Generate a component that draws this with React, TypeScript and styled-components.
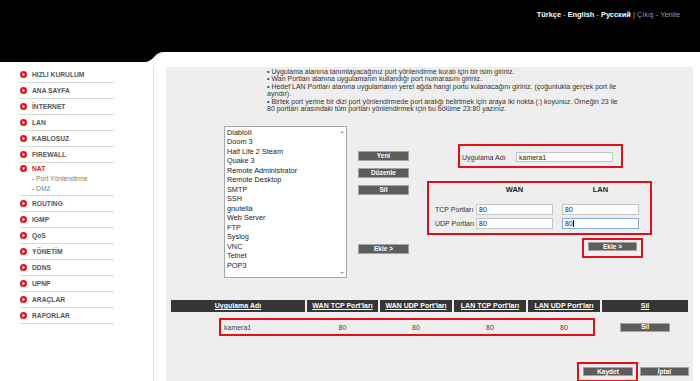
import React from 'react'
import styled, { createGlobalStyle } from 'styled-components'

const RED = '#e3101c'

const GlobalStyle = createGlobalStyle`
  html, body {
    margin: 0;
    padding: 0;
    overflow: hidden;
    background: #fff;
  }
  body {
    font-family: "Liberation Sans", Arial, sans-serif;
  }
`

const menu = [
  'HIZLI KURULUM',
  'ANA SAYFA',
  'İNTERNET',
  'LAN',
  'KABLOSUZ',
  'FIREWALL',
]

const menuAfter = ['ROUTING', 'IGMP', 'QoS', 'YÖNETİM', 'DDNS', 'UPNP', 'ARAÇLAR', 'RAPORLAR']

const apps = [
  'DiabloII',
  'Doom 3',
  'Half Life 2 Steam',
  'Quake 3',
  'Remote Administrator',
  'Remote Desktop',
  'SMTP',
  'SSH',
  'gnutella',
  'Web Server',
  'FTP',
  'Syslog',
  'VNC',
  'Telnet',
  'POP3',
]

const columns = ['Uygulama Adı', "WAN TCP Port'ları", "WAN UDP Port'ları", "LAN TCP Port'ları", "LAN UDP Port'ları", 'Sil']

const MenuIcon = ({ open }: { open?: boolean }) => (
  <svg width="7" height="7" viewBox="0 0 7 7">
    <circle cx="3.5" cy="3.5" r="3.5" fill={RED} />
    {open ? (
      <path d="M1.8 2.5 L5.2 2.5 L3.5 5.2 Z" fill="#fff" />
    ) : (
      <path d="M2.5 1.8 L5.2 3.5 L2.5 5.2 Z" fill="#fff" />
    )}
  </svg>
)

const App = () => {
  return (
    <Page>
      <GlobalStyle />
      <TopBar>
        <TopLinks>
          <Lang>Türkçe</Lang> <Dash>-</Dash> <Lang>English</Lang> <Dash>-</Dash> <Lang>Русский</Lang>{' '}
          <Pipe>|</Pipe> Çıkış - Yenile
        </TopLinks>
      </TopBar>
      <HeaderFoot width="170" height="10" viewBox="0 0 170 10">
        <path d="M0 0 H170 L164 0 C160 0 158 1 155 4 C151 8 149 10 143 10 H0 Z" fill="#000" />
      </HeaderFoot>

      <Main>
        <Sidebar>
          <Menu>
            {menu.map((m) => (
              <MenuItem key={m}>
                <MenuIcon />
                {m}
              </MenuItem>
            ))}
            <MenuGroup>
              <MenuItem $active $plain>
                <MenuIcon open />
                NAT
              </MenuItem>
              <SubItem>
                <SubDash>-</SubDash> Port Yönlendirme
              </SubItem>
              <SubItem>
                <SubDash>-</SubDash> DMZ
              </SubItem>
            </MenuGroup>
            {menuAfter.map((m) => (
              <MenuItem key={m}>
                <MenuIcon />
                {m}
              </MenuItem>
            ))}
          </Menu>
        </Sidebar>

        <Content>
          <Notes>
            • Uygulama alanına tanımlayacağınız port yönlendirme kuralı için bir isim giriniz.
            <br />
            • Wan Portları alanına uygulamanın kullandığı port numarasını giriniz.
            <br />
            • Hedef LAN Portları alanına uygulamanın yerel ağda hangi portu kulanacağını giriniz. (çoğunlukla gerçek port ile
            <br />
            ayrıdır).
            <br />
            • Birtek port yerine bir dizi port yönlendirmede port aralığı belirtmek için araya iki nokta (:) koyunuz. Örneğin 23 ile
            <br />
            80 portları arasındaki tüm portları yönlendirmek için bu bölüme 23:80 yazınız.
          </Notes>

          <FormArea>
            <AppList>
              <AppItems>
                {apps.map((a) => (
                  <AppItem key={a}>{a}</AppItem>
                ))}
              </AppItems>
              <ScrollTrack>
                <Arrow $down={false} />
                <Arrow $down />
              </ScrollTrack>
            </AppList>

            <ButtonColumn>
              <GrayButton>Yeni</GrayButton>
              <GrayButton>Düzenle</GrayButton>
              <GrayButton>Sil</GrayButton>
              <GrayButton $offset={42}>Ekle &gt;</GrayButton>
            </ButtonColumn>

            <RightPanel>
              <NameBox>
                <FieldLabel $width={54}>Uygulama Adı</FieldLabel>
                <Field $width={97} $height={10}>
                  kamera1
                </Field>
              </NameBox>

              <PortsBox>
                <PortHead />
                <PortHead>WAN</PortHead>
                <PortHead>LAN</PortHead>
                <PortLabel>TCP Portları</PortLabel>
                <Field $height={11}>80</Field>
                <Field $height={11}>80</Field>
                <PortLabel>UDP Portları</PortLabel>
                <Field $height={11}>80</Field>
                <Field $height={11} $focused>
                  80
                  <Caret />
                </Field>
              </PortsBox>

              <AddBox>
                <GrayButton $width={49} $height={9}>
                  Ekle &gt;
                </GrayButton>
              </AddBox>
            </RightPanel>
          </FormArea>

          <RuleTable>
            {columns.map((c) => (
              <HeadCell key={c}>{c}</HeadCell>
            ))}
            <RowHighlight />
            <DataCell $col={1} $left>
              kamera1
            </DataCell>
            <DataCell $col={2}>80</DataCell>
            <DataCell $col={3}>80</DataCell>
            <DataCell $col={4}>80</DataCell>
            <DataCell $col={5}>80</DataCell>
            <DataCell $col={6}>
              <GrayButton $width={50} $height={9}>
                Sil
              </GrayButton>
            </DataCell>
          </RuleTable>

          <Footer>
            <SaveBox>
              <GrayButton $width={50} $height={9}>
                Kaydet
              </GrayButton>
            </SaveBox>
            <CancelSlot>
              <GrayButton $width={49} $height={9}>
                İptal
              </GrayButton>
            </CancelSlot>
          </Footer>
        </Content>
      </Main>
    </Page>
  )
}

const Page = styled.div`
  display: flex;
  flex-direction: column;
  height: 100vh;
`

const TopBar = styled.header`
  height: 52px;
  background: #000;
  display: flex;
  justify-content: flex-end;
  align-items: flex-start;
  padding: 10px 20px 0 0;
  box-sizing: border-box;
`

const TopLinks = styled.div`
  font-size: 7.4px;
  line-height: 9px;
  color: #9a9a9a;
  white-space: pre;
`

const Lang = styled.span`
  color: #fff;
  font-weight: bold;
`

const Dash = styled.span`
  color: #ddd;
`

const Pipe = styled.span`
  color: #bbb;
`

const HeaderFoot = styled.svg`
  display: block;
  flex-shrink: 0;
`

const Main = styled.div`
  flex: 1;
  display: flex;
  margin-top: 5px;
  min-height: 0;
  overflow: hidden;
`

const Sidebar = styled.aside`
  width: 154px;
  flex-shrink: 0;
  box-sizing: border-box;
  border-right: 1px solid #e2e2e2;
  padding-left: 19px;
`

const Menu = styled.nav`
  width: 95px;
  display: flex;
  flex-direction: column;
`

const MenuItem = styled.div<{ $active?: boolean; $plain?: boolean }>`
  display: flex;
  align-items: center;
  gap: 5px;
  height: ${(p) => (p.$plain ? 11 : 15)}px;
  padding-left: 1px;
  border-bottom: ${(p) => (p.$plain ? 'none' : '1px solid #d9d9d9')};
  font-size: 6.7px;
  font-weight: bold;
  color: ${(p) => (p.$active ? RED : '#555')};
`

const MenuGroup = styled.div`
  display: flex;
  flex-direction: column;
  padding-bottom: 2px;
  border-bottom: 1px solid #d9d9d9;
`

const SubItem = styled.div`
  height: 9.5px;
  line-height: 9.5px;
  padding-left: 13px;
  font-size: 6.7px;
  color: #7a7a7a;
`

const SubDash = styled.span`
  color: ${RED};
`

const Content = styled.main`
  flex: 1;
  margin: 0 7px 0 12px;
  background: #eeeeee;
  display: flex;
  flex-direction: column;
  padding-top: 1px;
`

const Notes = styled.div`
  margin-left: 101px;
  font-size: 7px;
  line-height: 7.4px;
  color: #333;
  white-space: nowrap;
`

const FormArea = styled.div`
  display: flex;
  align-items: flex-start;
  margin-top: 14px;
`

const AppList = styled.div`
  margin-left: 58px;
  width: 123px;
  height: 152px;
  box-sizing: border-box;
  border: 1px solid #a9a9a9;
  background: #fff;
  display: flex;
`

const AppItems = styled.div`
  flex: 1;
  padding: 0.5px 0 0 2px;
`

const AppItem = styled.div`
  font-size: 7.3px;
  line-height: 9.5px;
  color: #222;
  white-space: nowrap;
`

const ScrollTrack = styled.div`
  width: 8px;
  display: flex;
  flex-direction: column;
  justify-content: space-between;
  align-items: center;
  padding: 4px 0 3px;
`

const Arrow = styled.span<{ $down: boolean }>`
  width: 0;
  height: 0;
  border-left: 2px solid transparent;
  border-right: 2px solid transparent;
  ${(p) => (p.$down ? 'border-top: 2px solid #a0a0a0;' : 'border-bottom: 2px solid #a0a0a0;')}
`

const ButtonColumn = styled.div`
  margin-left: 11px;
  padding-top: 25px;
  display: flex;
  flex-direction: column;
  gap: 7px;
`

const GrayButton = styled.button<{ $width?: number; $height?: number; $offset?: number }>`
  width: ${(p) => p.$width ?? 51}px;
  height: ${(p) => p.$height ?? 10}px;
  margin: ${(p) => p.$offset ?? 0}px 0 0;
  padding: 0;
  box-sizing: border-box;
  background: #5d5d5d;
  border: 1px solid #a3a3a3;
  color: #fff;
  font-family: inherit;
  font-size: 6.5px;
  font-weight: bold;
  line-height: 1;
  text-align: center;
  display: flex;
  align-items: center;
  justify-content: center;
`

const RightPanel = styled.div`
  margin-left: 18px;
  padding-top: 18px;
  display: flex;
  flex-direction: column;
`

const NameBox = styled.div`
  margin-left: 31px;
  width: 165px;
  height: 24px;
  box-sizing: border-box;
  border: 2px solid ${RED};
  display: flex;
  align-items: center;
  padding: 2px 0 0 2px;
`

const FieldLabel = styled.span<{ $width: number }>`
  width: ${(p) => p.$width}px;
  font-size: 7px;
  color: #333;
`

const Field = styled.div<{ $width?: number; $height: number; $focused?: boolean }>`
  ${(p) => (p.$width ? `width: ${p.$width}px;` : '')}
  height: ${(p) => p.$height}px;
  box-sizing: border-box;
  background: #fff;
  border: 1px solid ${(p) => (p.$focused ? '#86a9dc' : '#c4c4c4')};
  display: flex;
  align-items: center;
  padding-left: 2px;
  font-size: 7px;
  color: #222;
`

const Caret = styled.span`
  width: 1px;
  height: 7px;
  background: #000;
`

const PortsBox = styled.div`
  margin-top: 13px;
  width: 225px;
  height: 54px;
  box-sizing: border-box;
  border: 2px solid ${RED};
  padding-left: 6px;
  display: grid;
  grid-template-columns: 32px 77px 77px;
  grid-template-rows: 18px 11px 11px;
  column-gap: 9px;
  row-gap: 3px;
`

const PortHead = styled.div`
  align-self: start;
  line-height: 14px;
  text-align: center;
  font-size: 7.5px;
  font-weight: bold;
  color: #222;
`

const PortLabel = styled.div`
  font-size: 7px;
  line-height: 11px;
  color: #333;
  white-space: nowrap;
`

const AddBox = styled.div`
  margin: 3px 9px 0 0;
  align-self: flex-end;
  width: 61px;
  height: 20px;
  box-sizing: border-box;
  border: 2px solid ${RED};
  padding: 2px 0 0 4px;
`

const RuleTable = styled.div`
  margin: 22px 0 0 5px;
  display: grid;
  grid-template-columns: 134px 71px 72px 72px 72px 86px;
  grid-template-rows: 12px 18px;
  column-gap: 2px;
  row-gap: 6px;
`

const HeadCell = styled.div`
  grid-row: 1;
  background: #363636;
  color: #fff;
  font-size: 7px;
  font-weight: bold;
  line-height: 12px;
  text-align: center;
  text-decoration: underline;
  white-space: nowrap;
  overflow: hidden;
`

const RowHighlight = styled.div`
  grid-column: 1 / 6;
  grid-row: 2;
  margin: 0 5px 0 48px;
  border: 2px solid ${RED};
`

const DataCell = styled.div<{ $col: number; $left?: boolean }>`
  grid-column: ${(p) => p.$col};
  grid-row: 2;
  align-self: center;
  display: flex;
  justify-content: ${(p) => (p.$left ? 'flex-start' : 'center')};
  padding-left: ${(p) => (p.$left ? 53 : 0)}px;
  font-size: 7px;
  color: #444;
`

const Footer = styled.div`
  margin-top: 26px;
  display: flex;
  justify-content: flex-end;
  align-items: flex-start;
  gap: 2px;
  padding-right: 4px;
`

const SaveBox = styled.div`
  width: 61px;
  height: 20px;
  box-sizing: border-box;
  border: 2px solid ${RED};
  padding: 3px 0 0 4px;
`

const CancelSlot = styled.div`
  padding-top: 5px;
`

export default App
